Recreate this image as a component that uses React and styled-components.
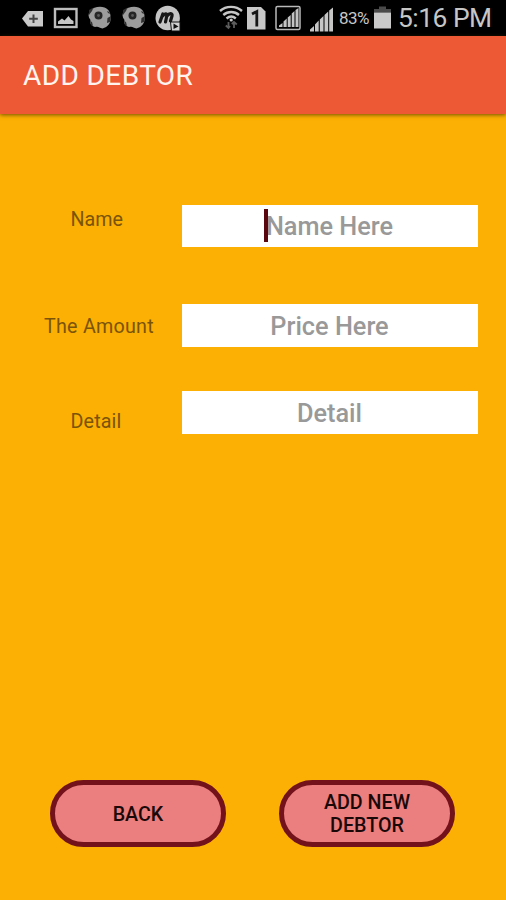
import React from "react";
import styled, { createGlobalStyle } from "styled-components";

const GlobalStyle = createGlobalStyle`
  body {
    margin: 0;
    background: #fcb004;
    font-family: Roboto, "Liberation Sans", sans-serif;
  }
`;

const Screen = styled.div`
  width: 506px;
  height: 900px;
  display: flex;
  flex-direction: column;
  overflow: hidden;
  background: #fcb004;
`;

const StatusBar = styled.div`
  height: 36px;
  flex: none;
  display: flex;
  align-items: flex-start;
  background: #000000;
  color: #c6c6c6;
`;

const StatusIcon = styled.svg`
  flex: none;
  display: block;
  height: 36px;
  width: ${(p) => p.$width}px;
  margin-left: ${(p) => p.$gap}px;
`;

const Percent = styled.span`
  width: 32px;
  margin-left: 5px;
  font-size: 17px;
  line-height: 37px;
  letter-spacing: -0.6px;
  white-space: nowrap;
`;

const Clock = styled.span`
  margin-left: 7px;
  font-size: 26.4px;
  line-height: 36px;
  letter-spacing: -0.5px;
  white-space: nowrap;
`;

const AppBar = styled.header`
  position: relative;
  height: 78px;
  flex: none;
  box-sizing: border-box;
  display: flex;
  align-items: center;
  padding: 2px 23px 0;
  background: #ee5935;
  box-shadow: 0 1px 4px rgba(70, 50, 0, 0.75);

  h1 {
    margin: 0;
    color: #fff4ee;
    font-size: 28px;
    font-weight: 400;
    line-height: 32px;
    letter-spacing: 0.4px;
  }
`;

const Form = styled.form`
  flex: 1;
  display: flex;
  flex-direction: column;
  padding-top: 90.5px;
`;

const Row = styled.div`
  display: flex;
  margin-bottom: ${(p) => p.$space}px;
`;

const Label = styled.label`
  width: 181.5px;
  box-sizing: border-box;
  padding-left: ${(p) => p.$indent}px;
  padding-top: ${(p) => p.$drop}px;
  color: #7a5408;
  font-size: 19.7px;
  line-height: 24px;
  letter-spacing: ${(p) => p.$spacing || 0}px;
  white-space: nowrap;
`;

const Field = styled.div`
  width: 296px;
  height: 42.5px;
  box-sizing: border-box;
  display: flex;
  align-items: center;
  justify-content: center;
  padding-top: 3px;
  background: #ffffff;
  color: #999999;
  font-size: 25.3px;
  font-weight: 500;
  line-height: 30px;
`;

const Hint = styled.span`
  position: relative;
`;

const Caret = styled.i`
  position: absolute;
  left: -2px;
  top: -3px;
  width: 4px;
  height: 33px;
  background: #5a0710;
`;

const Actions = styled.div`
  display: flex;
  gap: 53px;
  margin-top: auto;
  padding: 0 0 53px 49.5px;
`;

const Button = styled.button`
  width: 176px;
  height: 67px;
  padding: 1px 33px 0 34px;
  box-sizing: border-box;
  border: 5px solid #73121a;
  border-radius: 34px;
  background: #eb7e7e;
  color: #1a0808;
  font-family: inherit;
  font-size: 19.7px;
  font-weight: 500;
  line-height: 23px;
`;

const TagIcon = () => (
  <StatusIcon $width={22} $gap={22} viewBox="0 0 22 36">
    <path d="M0 18.5 L6 11 H21 V26.5 H6Z" fill="#c9c9c9" />
    <path d="M11.5 14.5V23M7.2 18.7H15.8" stroke="#444" strokeWidth="2" />
  </StatusIcon>
);

const PictureIcon = () => (
  <StatusIcon $width={25} $gap={9} viewBox="0 0 25 36">
    <rect x="2" y="9" width="21.5" height="18" fill="none" stroke="#bdbdbd" strokeWidth="2.4" />
    <path d="M5 24V21.5L9 18.5L11.5 20.5L15.5 16L18 19.5L20.5 21V24Z" fill="#c6c6c6" />
  </StatusIcon>
);

const BallIcon = ({ gap }) => (
  <StatusIcon $width={24} $gap={gap} viewBox="0 0 24 36">
    <path
      d="M2 11C5 7 12 6 16.5 7.5C21 9 23 13.5 22.5 18C23 23 20 27 14.5 28.5C11 27.5 10.5 26 7 27C3.5 26 1.5 23.5 2.5 20C0 17 0 14 2 11Z"
      fill="#9c9c9c"
    />
    <circle cx="10.5" cy="15.5" r="4" fill="#262626" />
    <circle cx="10.5" cy="15.5" r="1.4" fill="#5a5a5a" />
    <path d="M1 10L5.5 7.5L4 11L1 15ZM19 11L21.5 12L22 14L20 13ZM19.5 18L23 16L22 22L19 23ZM2 21L4 22L5 26L3 25Z" fill="#303030" />
  </StatusIcon>
);

const MessengerIcon = () => (
  <StatusIcon $width={27} $gap={9} viewBox="0 0 27 36">
    <circle cx="12.7" cy="18" r="12.2" fill="#c5c5c5" />
    <path
      d="M5 22L7.8 14M7.8 16C10 12.5 12.5 13.5 11.8 16L10.5 22M12 16C14.5 12.5 17.8 13 17 16L15.5 21"
      fill="none"
      stroke="#171717"
      strokeWidth="3.2"
      strokeLinecap="round"
    />
    <path d="M15.5 22H25V31H16.5Z" fill="#d0d0d0" stroke="#111" />
    <path d="M18.5 23.5L23.5 26.5L18.5 29Z" fill="#111" />
  </StatusIcon>
);

const WifiIcon = () => (
  <StatusIcon $width={24} $gap={37} viewBox="0 0 24 36">
    <g fill="none" stroke="#c6c6c6" strokeWidth="2.4">
      <path d="M1 11C7 5.5 17 5.5 23 11" />
      <path d="M4.3 15C9 11 15.5 11 20 15" />
      <path d="M7.5 18.5C10.5 16 14 16 16.8 18.5" />
    </g>
    <circle cx="12.2" cy="20" r="1.6" fill="#c6c6c6" />
    <path d="M9.5 22V28M6.8 25.5L9.5 28L11 26M15 28V22M12.8 24L15 22L17.8 24.5" fill="none" stroke="#5c5c5c" strokeWidth="1.8" />
  </StatusIcon>
);

const SimIcon = () => (
  <StatusIcon $width={19} $gap={4} viewBox="0 0 19 36">
    <path d="M0 7H14L18.5 11.5V29.5H0Z" fill="#c8c8c8" />
    <path d="M5 14L9.8 11.5V26.5" fill="none" stroke="#161616" strokeWidth="2.8" />
  </StatusIcon>
);

const FramedSignalIcon = () => (
  <StatusIcon $width={27} $gap={9} viewBox="0 0 27 36">
    <rect x="1" y="6.5" width="24" height="23" rx="1.5" fill="none" stroke="#b9b9b9" strokeWidth="1.5" />
    <path d="M4 27V25.5L7.5 23V27ZM8.5 27V21.5L11.7 18.5V27ZM12.7 27V17.5L15.7 15V27ZM16.7 27V13.5L19.5 11V27ZM20.5 27V10L23.5 8V27Z" fill="#c3c3c3" />
  </StatusIcon>
);

const SignalIcon = () => (
  <StatusIcon $width={24} $gap={8} viewBox="0 0 24 36">
    <path d="M0 31.5V29.5L4 26V31.5ZM5 31.5V24.5L8.7 20.5V31.5ZM9.8 31.5V19.5L13.5 16V31.5ZM14.5 31.5V15L18.2 11.5V31.5ZM19.2 31.5V10.5L23 7.5V31.5Z" fill="#c6c6c6" />
  </StatusIcon>
);

const BatteryIcon = () => (
  <StatusIcon $width={17} $gap={3} viewBox="0 0 17 36">
    <path d="M0 9H5V6.5H12V9H17V12.5H0Z" fill="#4a4a4a" />
    <path d="M0 12.5H17V28.5H0Z" fill="#c9c9c9" />
  </StatusIcon>
);

const App = () => {
  return (
    <>
      <GlobalStyle />
      <Screen>
        <StatusBar>
          <TagIcon />
          <PictureIcon />
          <BallIcon gap={10} />
          <BallIcon gap={10} />
          <MessengerIcon />
          <WifiIcon />
          <SimIcon />
          <FramedSignalIcon />
          <SignalIcon />
          <Percent>83%</Percent>
          <BatteryIcon />
          <Clock>5:16 PM</Clock>
        </StatusBar>
        <AppBar>
          <h1>ADD DEBTOR</h1>
        </AppBar>
        <Form>
          <Row $space={57}>
            <Label $indent={70.5} $drop={3.5}>Name</Label>
            <Field>
              <Hint>
                <Caret />
                Name Here
              </Hint>
            </Field>
          </Row>
          <Row $space={44.5}>
            <Label $indent={44} $drop={10.5} $spacing={0.25}>The Amount</Label>
            <Field>
              <Hint>Price Here</Hint>
            </Field>
          </Row>
          <Row $space={0}>
            <Label $indent={70.5} $drop={18.5} $spacing={0.15}>Detail</Label>
            <Field>
              <Hint>Detail</Hint>
            </Field>
          </Row>
          <Actions>
            <Button type="button">BACK</Button>
            <Button type="button">ADD NEW DEBTOR</Button>
          </Actions>
        </Form>
      </Screen>
    </>
  );
};

export default App;
